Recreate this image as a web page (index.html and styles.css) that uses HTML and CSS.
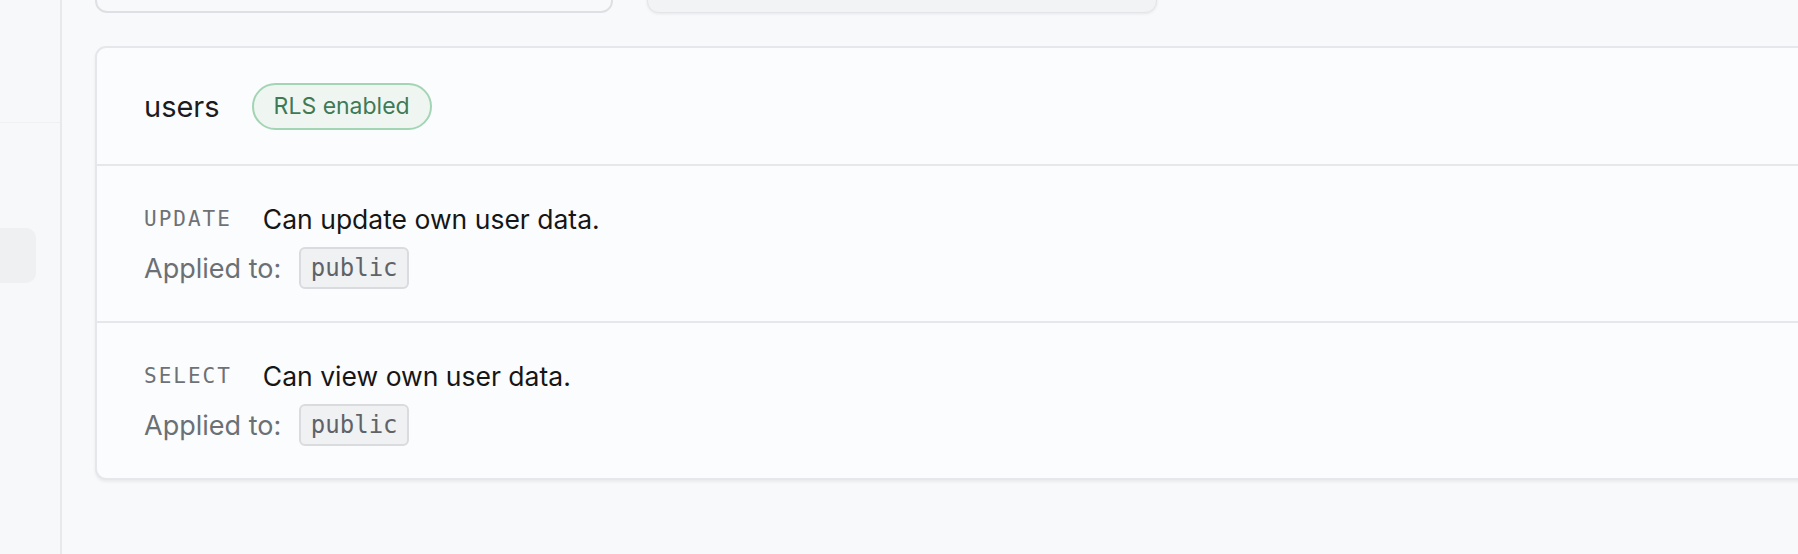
FILE: index.html
```html
<!DOCTYPE html>
<html lang="en">
<head>
<meta charset="utf-8">
<title>Policies</title>
<link rel="stylesheet" href="styles.css">
</head>
<body>
<div class="app">
  <aside class="sidebar">
    <div class="sidebar-top"></div>
    <div class="sidebar-item"></div>
  </aside>
  <main class="main">
    <div class="summary">
      <div class="stat-card"></div>
      <div class="stat-card stat-card-muted"></div>
    </div>
    <section class="table-card">
      <header class="table-head">
        <h2 class="table-name">users</h2>
        <span class="badge">RLS enabled</span>
      </header>
      <div class="policy">
        <div class="policy-line">
          <span class="policy-cmd">UPDATE</span>
          <span class="policy-desc">Can update own user data.</span>
        </div>
        <div class="policy-roles">
          <span class="roles-label">Applied to:</span>
          <code class="role-chip">public</code>
        </div>
      </div>
      <div class="policy">
        <div class="policy-line">
          <span class="policy-cmd">SELECT</span>
          <span class="policy-desc">Can view own user data.</span>
        </div>
        <div class="policy-roles">
          <span class="roles-label">Applied to:</span>
          <code class="role-chip">public</code>
        </div>
      </div>
    </section>
  </main>
</div>
</body>
</html>
```

FILE: styles.css
```css
* { box-sizing: border-box; }

html, body {
  margin: 0;
  padding: 0;
  height: 100%;
  overflow: hidden;
  background: #f8f9fa;
  font-family: Inter, "Liberation Sans", sans-serif;
  color: #1c1c1c;
}

.app {
  display: flex;
  height: 554px;
}

.sidebar {
  flex: 0 0 62px;
  width: 62px;
  border-right: 2px solid #e8e9eb;
  background: #f7f8f9;
  display: flex;
  flex-direction: column;
}

.sidebar-top {
  height: 123px;
  border-bottom: 1px solid #eff0f2;
}

.sidebar-item {
  margin-top: 105px;
  width: 36px;
  height: 55px;
  border-radius: 0 10px 10px 0;
  background: #eff0f2;
}

.main {
  flex: 1 1 auto;
  min-width: 0;
  padding-left: 33px;
}

.summary {
  display: grid;
  grid-template-columns: 518px 510px;
  column-gap: 34px;
  margin-top: -107px;
}

.stat-card {
  height: 120px;
  border: 2px solid #dfe0e3;
  border-radius: 12px;
  background: #f8f9fa;
}

.stat-card-muted {
  border: 1px solid #e4e5e8;
  background: #f2f3f5;
  box-shadow: 0 1px 3px rgba(0, 0, 0, 0.08);
}

.table-card {
  margin-top: 33px;
  width: 1900px;
  border: 2px solid #e6e7ea;
  border-radius: 11px;
  background: #fbfcfd;
  box-shadow: 0 2px 3px rgba(0, 0, 0, 0.06);
}

.table-head {
  display: flex;
  align-items: center;
  gap: 32px;
  height: 118px;
  padding: 0 47px;
  border-bottom: 2px solid #e6e7ea;
}

.table-name {
  margin: 0;
  font-size: 29px;
  font-weight: 400;
  color: #1c1c1c;
}

.badge {
  display: inline-flex;
  align-items: center;
  height: 47px;
  padding: 0 20px;
  border: 2px solid #a3d5b4;
  border-radius: 24px;
  background: #eff6f2;
  color: #3e7a56;
  font-size: 23px;
}

.policy {
  display: flex;
  flex-direction: column;
  gap: 10px;
  padding: 34px 47px 32px;
  border-bottom: 2px solid #e6e7ea;
}

.policy:last-child {
  border-bottom: none;
}

.policy-line {
  display: flex;
  align-items: center;
  gap: 31px;
  height: 37px;
}

.policy-cmd {
  font-family: "DejaVu Sans Mono", "Liberation Mono", monospace;
  font-size: 21px;
  letter-spacing: 2px;
  color: #6e7276;
}

.policy-desc {
  font-size: 26.5px;
  color: #161616;
}

.policy-roles {
  display: flex;
  align-items: center;
  gap: 18px;
}

.roles-label {
  font-size: 27px;
  color: #6b7075;
}

.role-chip {
  display: inline-flex;
  align-items: center;
  justify-content: center;
  width: 110px;
  height: 42px;
  border: 2px solid #dadbde;
  border-radius: 6px;
  background: #f0f1f3;
  font-family: "DejaVu Sans Mono", "Liberation Mono", monospace;
  font-size: 24px;
  color: #5f6368;
}
```
